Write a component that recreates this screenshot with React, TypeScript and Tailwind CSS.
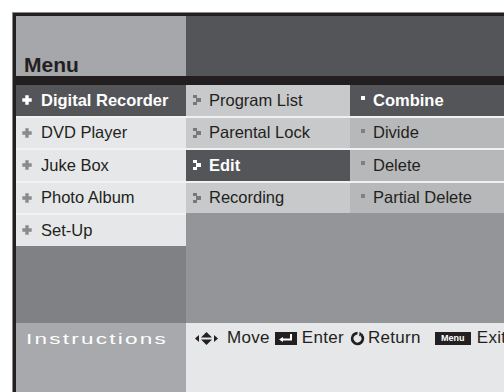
import React from "react";

const PlusIcon = ({ active }: { active?: boolean }) => (
  <svg width="10" height="10" viewBox="0 0 10 10" className="shrink-0">
    <path
      d="M3.3 0.3h3.4v3h3v3.4h-3v3h-3.4v-3h-3v-3.4h3z"
      fill={active ? "#ffffff" : "#8a8b8d"}
    />
  </svg>
);

const StepArrow = ({ active }: { active?: boolean }) => (
  <svg width="8" height="10" viewBox="0 0 8 10" className="shrink-0">
    <path
      d="M0 0h4v3h4v4h-4v3h-4v-3h3v-4h-3z"
      fill={active ? "#ffffff" : "#77787b"}
    />
  </svg>
);

const Bullet = ({ active }: { active?: boolean }) => (
  <span
    className={`inline-block w-[4px] h-[4px] shrink-0 -translate-y-[2px] ${
      active ? "bg-white" : "bg-[#808184]"
    }`}
  />
);

const leftItems = ["Digital Recorder", "DVD Player", "Juke Box", "Photo Album", "Set-Up"];
const midItems = ["Program List", "Parental Lock", "Edit", "Recording"];
const rightItems = ["Combine", "Divide", "Delete", "Partial Delete"];

const Sep = () => <div className="h-[2px] bg-[#f1f1f2]" />;

export default function App() {
  return (
    <div className="w-[504px] h-[392px] bg-white overflow-hidden relative font-['Liberation_Sans',Arial,sans-serif] text-[#231f20]">
      <div className="mt-[12px] ml-[12px] w-[520px] h-[400px] border-t border-l border-[#8a8a8a]">
        <div className="h-full border-t-[3px] border-l-[3px] border-[#231f20] flex flex-col">
          {/* header */}
          <div className="grid grid-cols-[170px_1fr] h-[60px]">
            <div className="bg-[#a6a7aa] flex items-end pl-[8px] pb-[1px]">
              <span className="text-[21px] font-bold leading-none">Menu</span>
            </div>
            <div className="bg-[#545559]" />
          </div>
          <div className="h-[9px] bg-[#231f20]" />

          {/* menu columns */}
          <div className="grid grid-cols-[170px_164px_1fr] h-[238px] text-[16.5px]">
            <div className="flex flex-col bg-[#808184]">
              {leftItems.map((item, i) => (
                <React.Fragment key={item}>
                  {i > 0 && <Sep />}
                  <div
                    className={`h-[30.5px] flex items-center gap-[9px] pl-[6px] ${
                      i === 0 ? "bg-[#545559] text-white font-bold" : "bg-[#e6e7e8]"
                    }`}
                  >
                    <PlusIcon active={i === 0} />
                    <span>{item}</span>
                  </div>
                </React.Fragment>
              ))}
            </div>
            <div className="flex flex-col bg-[#939598]">
              {midItems.map((item, i) => (
                <React.Fragment key={item}>
                  {i > 0 && <Sep />}
                  <div
                    className={`h-[30.5px] flex items-center gap-[8px] pl-[7px] ${
                      i === 2 ? "bg-[#545559] text-white font-bold" : "bg-[#c8c9cb]"
                    }`}
                  >
                    <StepArrow active={i === 2} />
                    <span>{item}</span>
                  </div>
                </React.Fragment>
              ))}
            </div>
            <div className="flex flex-col bg-[#939598]">
              {rightItems.map((item, i) => (
                <React.Fragment key={item}>
                  {i > 0 && <Sep />}
                  <div
                    className={`h-[30.5px] flex items-center gap-[8px] pl-[11px] ${
                      i === 0 ? "bg-[#545559] text-white font-bold" : "bg-[#b7b8ba]"
                    }`}
                  >
                    <Bullet active={i === 0} />
                    <span>{item}</span>
                  </div>
                </React.Fragment>
              ))}
            </div>
          </div>

          {/* instructions */}
          <div className="grid grid-cols-[170px_1fr] flex-1">
            <div className="bg-[#a7a9ac] pl-[10px] pt-[4px]">
              <span className="inline-block text-white text-[15px] tracking-[1.5px] scale-x-150 origin-left">
                Instructions
              </span>
            </div>
            <div className="bg-[#e6e7e8] pl-[9px] pt-[6px] flex items-start text-[17px] tracking-[0.3px] whitespace-nowrap">
              <div className="flex items-center h-[18px]">
                <svg width="27" height="15" viewBox="0 0 27 15" className="mr-[5px]">
                  <path d="M4 4L0 7.5L4 11z" fill="#231f20" />
                  <path d="M6 6.5L11.5 1L17 6.5z" fill="#231f20" />
                  <path d="M6 8.5L11.5 14L17 8.5z" fill="#231f20" />
                  <path d="M19 4L23 7.5L19 11z" fill="#231f20" />
                </svg>
                <span>Move</span>
                <span className="ml-[5px] mr-[5px] w-[22px] h-[13px] bg-[#231f20] flex items-center justify-center">
                  <svg width="16" height="9" viewBox="0 0 16 9">
                    <path d="M13 0v5.5H4" stroke="#fff" strokeWidth="2" fill="none" />
                    <path d="M1 5.5L5 3v5z" fill="#fff" />
                  </svg>
                </span>
                <span>Enter</span>
                <svg width="15" height="15" viewBox="0 0 15 15" className="ml-[6px] mr-[3px]">
                  <circle
                    cx="7.5"
                    cy="7.5"
                    r="5.3"
                    stroke="#231f20"
                    strokeWidth="2.8"
                    fill="none"
                    strokeDasharray="28 5.3"
                    transform="rotate(-40 7.5 7.5)"
                  />
                  <path d="M9.5 0.8L13.2 3.8L9.2 5.2z" fill="#231f20" />
                </svg>
                <span>Return</span>
                <span className="ml-[14px] mr-[6px] w-[36px] h-[13px] bg-[#231f20] text-white text-[9px] tracking-normal font-bold flex items-center justify-center leading-none">
                  Menu
                </span>
                <span>Exit</span>
              </div>
            </div>
          </div>
        </div>
      </div>
    </div>
  );
}
